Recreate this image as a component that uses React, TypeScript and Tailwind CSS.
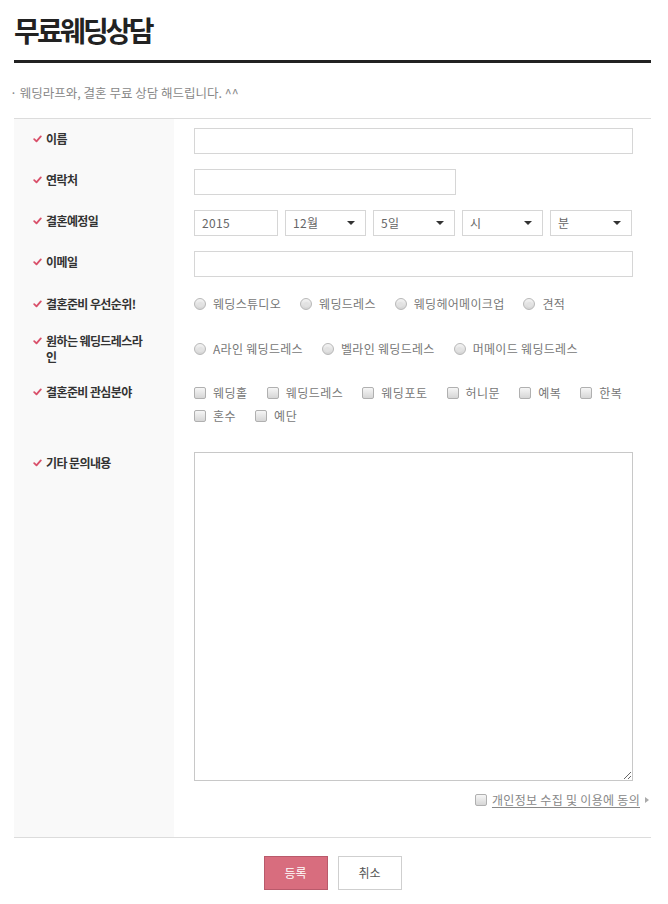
import React from "react";

const font = { fontFamily: '"Noto Sans CJK KR", "Noto Sans", sans-serif' };

function Check() {
  return (
    <svg width="9" height="8" viewBox="0 0 9 8" className="mr-[4px] shrink-0">
      <path d="M1.2 4.2 L3.5 6.4 L7.8 1.4" fill="none" stroke="#d9506a" strokeWidth="1.8" strokeLinecap="round" strokeLinejoin="round" />
    </svg>
  );
}

function Label({ children, center = false, pt = 12 }: { children: React.ReactNode; center?: boolean; pt?: number }) {
  return (
    <div
      className={`w-[160px] shrink-0 bg-[#f9f9f9] pl-[19px] pr-[10px] flex ${center ? "items-center" : "items-start"}`}
      style={center ? undefined : { paddingTop: pt }}
    >
      <div className="flex items-start text-[12px] leading-[16px] font-bold text-[#333] tracking-[-0.6px]">
        <span className="h-[16px] flex items-center"><Check /></span>
        <span>{children}</span>
      </div>
    </div>
  );
}

function Radio({ label }: { label: string }) {
  return (
    <span className="flex items-center mr-[19px]">
      <span className="w-[12px] h-[12px] rounded-full border border-[#b8b8b8] bg-gradient-to-b from-[#f4f4f4] to-[#d4d4d4] flex items-center justify-center mr-[7px]">
        <span className="w-[5px] h-[5px] rounded-full bg-[#e2e2e2]" />
      </span>
      <span>{label}</span>
    </span>
  );
}

function Box({ label }: { label: string }) {
  return (
    <span className="flex items-center mr-[19px]">
      <span className="w-[12px] h-[12px] rounded-[2px] border border-[#b0b0b0] bg-gradient-to-b from-[#f6f6f6] to-[#d6d6d6] mr-[7px]" />
      <span>{label}</span>
    </span>
  );
}

function Select({ w, text }: { w: string; text: string }) {
  return (
    <div className={`${w} h-[26px] border border-[#d6d6d6] flex items-center justify-between pl-[7px] pr-[10px] text-[12px] text-[#666] tracking-[0.3px]`}>
      <span>{text}</span>
      <svg width="8" height="4" viewBox="0 0 8 4"><path d="M0 0 L8 0 L4 4 Z" fill="#333" /></svg>
    </div>
  );
}

export default function App() {
  return (
    <div className="bg-white min-h-[904px] pl-[14px] pr-[17px] text-[#555]" style={font}>
      <div className="h-[60px] flex items-center">
        <h1 className="text-[28px] font-bold text-[#222] tracking-[-2.8px] leading-none">무료웨딩상담</h1>
      </div>
      <div className="h-[3px] bg-[#222]" />
      <div className="pt-[21px] pb-[17px] -ml-[4px] text-[12.5px] leading-[17px] text-[#888]">· 웨딩라프와, 결혼 무료 상담 해드립니다. ^^</div>

      <div className="border-t border-b border-[#dcdcdc]">
        <div className="flex">
          <Label>이름</Label>
          <div className="flex-1 pl-[20px] pr-[18px] pt-[9px] pb-[6px]">
            <div className="h-[26px] border border-[#d6d6d6]" />
          </div>
        </div>
        <div className="flex">
          <Label>연락처</Label>
          <div className="flex-1 pl-[20px] pr-[18px] pt-[9px] pb-[6px]">
            <div className="w-[262px] h-[26px] border border-[#d6d6d6]" />
          </div>
        </div>
        <div className="flex">
          <Label>결혼예정일</Label>
          <div className="flex-1 pl-[20px] pr-[18px] pt-[9px] pb-[6px] flex gap-[7px]">
            <div className="w-[84px] h-[26px] border border-[#d6d6d6] flex items-center pl-[7px] text-[12px] text-[#666] tracking-[0.3px]">2015</div>
            <Select w="w-[81px]" text="12월" />
            <Select w="w-[82px]" text="5일" />
            <Select w="w-[81px]" text="시" />
            <Select w="w-[82px]" text="분" />
          </div>
        </div>
        <div className="flex">
          <Label>이메일</Label>
          <div className="flex-1 pl-[20px] pr-[18px] pt-[9px] pb-[6px]">
            <div className="h-[26px] border border-[#d6d6d6]" />
          </div>
        </div>
        <div className="flex">
          <Label pt={13}>결혼준비 우선순위!</Label>
          <div className="flex-1 pl-[20px] pr-[18px] pt-[13px] pb-[21px] flex text-[12px] leading-[16px] text-[#777] tracking-[0.3px]">
            <Radio label="웨딩스튜디오" />
            <Radio label="웨딩드레스" />
            <Radio label="웨딩헤어메이크업" />
            <Radio label="견적" />
          </div>
        </div>
        <div className="flex">
          <Label center>원하는 웨딩드레스라<br />인</Label>
          <div className="flex-1 pl-[20px] pr-[18px] h-[32px] flex items-center text-[12px] leading-[16px] text-[#777] tracking-[0.3px]">
            <Radio label="A라인 웨딩드레스" />
            <Radio label="벨라인 웨딩드레스" />
            <Radio label="머메이드 웨딩드레스" />
          </div>
        </div>
        <div className="flex">
          <Label pt={19}>결혼준비 관심분야</Label>
          <div className="flex-1 pl-[20px] pr-0 pt-[20px] pb-0 flex flex-wrap gap-y-[7px] text-[12px] leading-[16px] text-[#777] tracking-[0.5px]">
            <Box label="웨딩홀" />
            <Box label="웨딩드레스" />
            <Box label="웨딩포토" />
            <Box label="허니문" />
            <Box label="예복" />
            <Box label="한복" />
            <Box label="혼수" />
            <Box label="예단" />
          </div>
        </div>
        <div className="flex">
          <Label pt={31}>기타 문의내용</Label>
          <div className="flex-1 pl-[20px] pr-[18px] pt-[28px] pb-[29px]">
            <textarea className="block w-full h-[329px] border border-[#c8c8c8] outline-none" />
            <div className="mt-[11px] -mr-[17px] flex justify-end items-center text-[12px] leading-[16px] text-[#888] tracking-[0.3px]">
              <span className="w-[12px] h-[12px] rounded-[2px] border border-[#b0b0b0] bg-gradient-to-b from-[#f6f6f6] to-[#d6d6d6] mr-[5px]" />
              <span className="underline underline-offset-2">개인정보 수집 및 이용에 동의</span>
              <svg width="4" height="6" viewBox="0 0 4 6" className="ml-[5px] mr-[1px]"><path d="M0 0 L4 3 L0 6 Z" fill="#aaa" /></svg>
            </div>
          </div>
        </div>
      </div>

      <div className="flex justify-center gap-[10px] mt-[18px]">
        <button className="w-[64px] h-[34px] bg-[#d86d7e] border border-[#b95a6b] text-white text-[12px]">등록</button>
        <button className="w-[64px] h-[34px] bg-white border border-[#cfcfcf] text-[#555] text-[12px]">취소</button>
      </div>
    </div>
  );
}
